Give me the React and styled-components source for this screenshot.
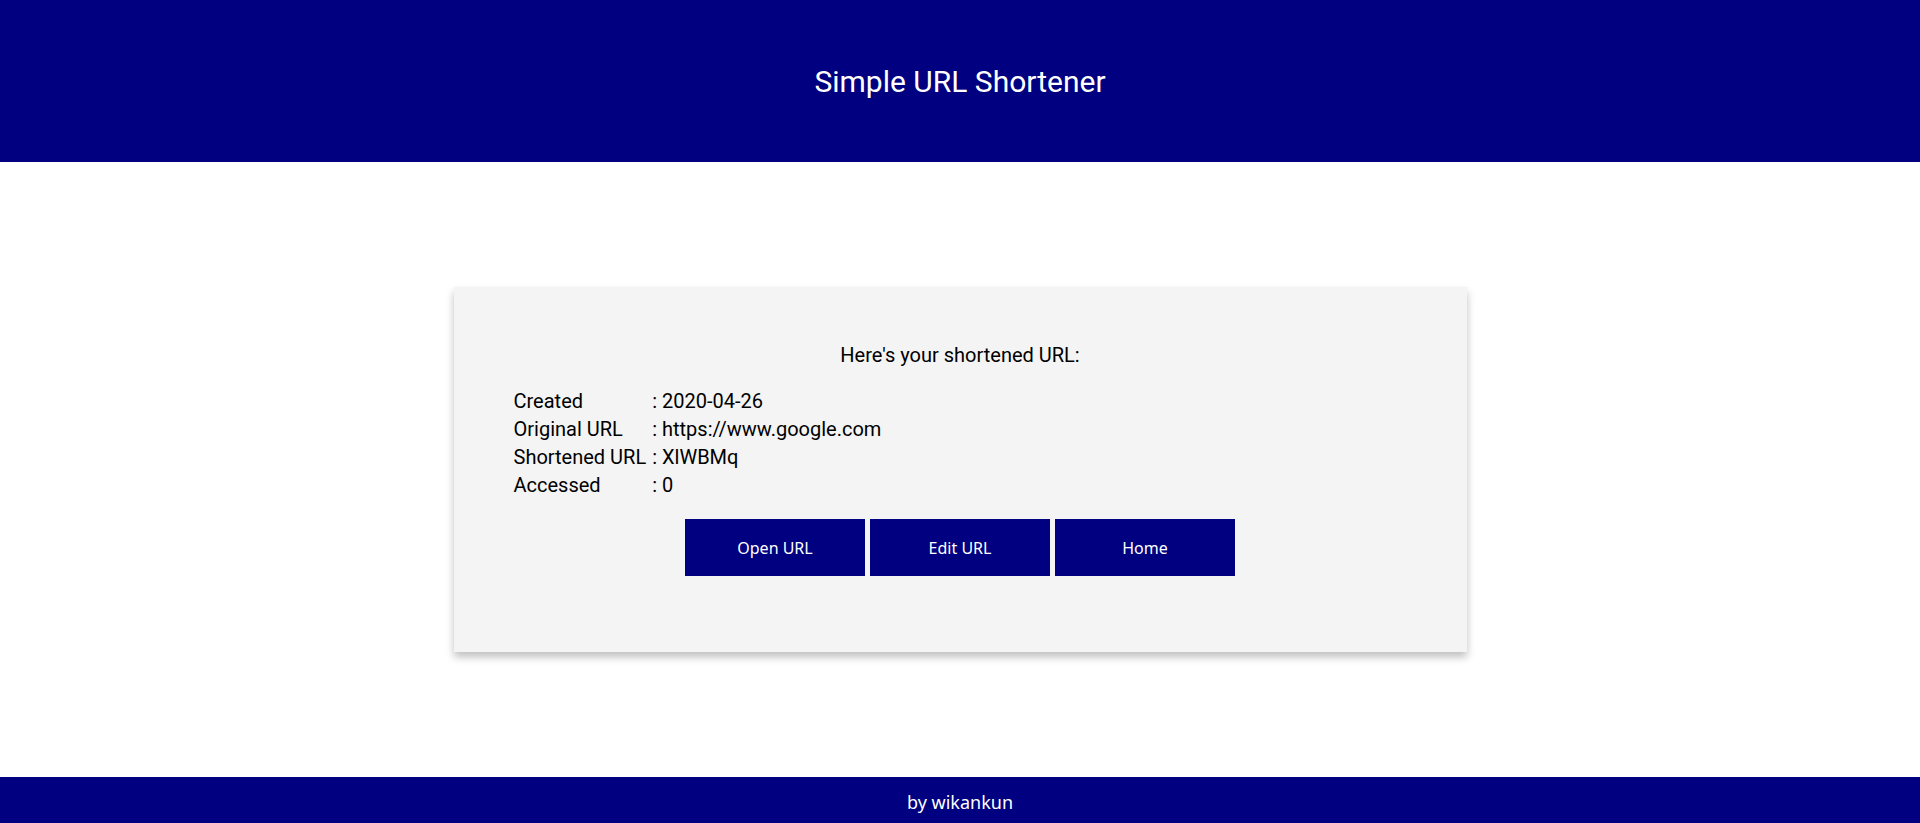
import React from "react";
import styled, {createGlobalStyle} from "styled-components";

const GlobalStyle = createGlobalStyle`
  html, body {
    margin: 0;
    padding: 0;
  }
  body {
    font-family: Roboto, "Liberation Sans", sans-serif;
    color: #000;
    background: #fff;
  }
`;

const Page = styled.div`
  display: flex;
  flex-direction: column;
  height: 823px;
`;

const Header = styled.header`
  height: 162px;
  flex-shrink: 0;
  background-color: #000080;
  color: #fff;
  display: flex;
  align-items: center;
  justify-content: center;
`;

const Title = styled.h1`
  margin: 0;
  font-size: 30px;
  font-weight: 400;
`;

const Main = styled.main`
  flex: 1;
  display: flex;
  align-items: center;
  justify-content: center;
`;

const Card = styled.div`
  width: 1013px;
  height: 365px;
  box-sizing: border-box;
  padding: 54px 60px 0;
  background-color: #f4f4f4;
  box-shadow: 0 5px 8px rgba(0, 0, 0, 0.25);
`;

const Heading = styled.div`
  text-align: center;
  font-size: 20px;
  line-height: 28px;
`;

const InfoGrid = styled.div`
  display: grid;
  grid-template-columns: max-content 1fr;
  column-gap: 6px;
  margin-top: 18px;
  font-size: 20px;
  line-height: 28px;
`;

const Buttons = styled.div`
  display: flex;
  justify-content: center;
  gap: 5px;
  margin-top: 20px;
`;

const Button = styled.button`
  width: 180px;
  height: 57px;
  border: none;
  background-color: #000080;
  color: #fff;
  font-family: "Noto Sans", "Open Sans", sans-serif;
  font-size: 16px;
  cursor: pointer;
`;

const Footer = styled.footer`
  height: 46px;
  box-sizing: border-box;
  padding-top: 3px;
  flex-shrink: 0;
  background-color: #000080;
  color: #fff;
  display: flex;
  align-items: center;
  justify-content: center;
  font-family: "Noto Sans", "Open Sans", sans-serif;
  font-size: 18px;
`;

const info = [
  ["Created", "2020-04-26"],
  ["Original URL", "https://www.google.com"],
  ["Shortened URL", "XlWBMq"],
  ["Accessed", "0"],
];

const App = () => {
  return (
    <>
      <GlobalStyle/>
      <Page>
        <Header>
          <Title>Simple URL Shortener</Title>
        </Header>
        <Main>
          <Card>
            <Heading>Here's your shortened URL:</Heading>
            <InfoGrid>
              {info.map(([label, value]) => (
                <React.Fragment key={label}>
                  <span>{label}</span>
                  <span>: {value}</span>
                </React.Fragment>
              ))}
            </InfoGrid>
            <Buttons>
              <Button>Open URL</Button>
              <Button>Edit URL</Button>
              <Button>Home</Button>
            </Buttons>
          </Card>
        </Main>
        <Footer>by wikankun</Footer>
      </Page>
    </>
  )
};

export default App;
